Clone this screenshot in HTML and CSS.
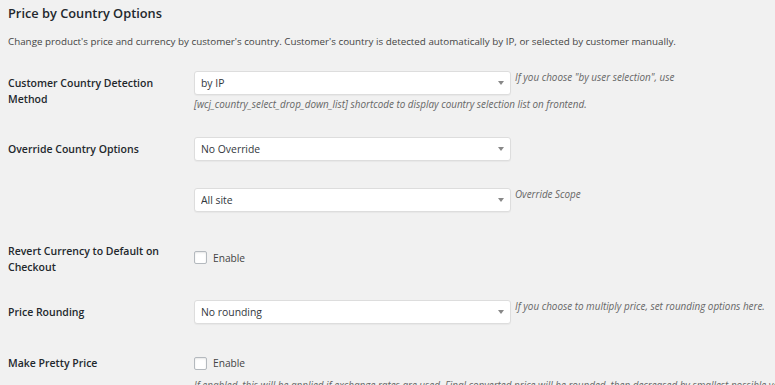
FILE: index.html
```html
<!doctype html>
<html>

	<head>
		<title>Price by Country Options</title>
		<meta charset="utf-8" />
		<link rel="stylesheet" href="styles.css">
	</head>

	<body>

		<div class="wrap">
			<h2>Price by Country Options</h2>
			<p class="intro">Change product's price and currency by customer's country. Customer's country is detected automatically by IP, or selected by customer manually.</p>

			<div class="row row-detect">
				<div class="label">Customer Country Detection Method</div>
				<div class="field">
					<span class="select"><select><option>by IP</option></select></span><span class="desc">If you choose "by user selection", use [wcj_country_select_drop_down_list] shortcode to display country selection list on frontend.</span>
				</div>
			</div>

			<div class="row row-override">
				<div class="label">Override Country Options</div>
				<div class="field">
					<span class="select"><select><option>No Override</option></select></span>
				</div>
			</div>

			<div class="row row-scope">
				<div class="label"></div>
				<div class="field">
					<span class="select"><select><option>All site</option></select></span><span class="desc">Override Scope</span>
				</div>
			</div>

			<div class="row row-revert">
				<div class="label label-plain">Revert Currency to Default on Checkout</div>
				<div class="field">
					<label class="check"><input type="checkbox" /> Enable</label>
				</div>
			</div>

			<div class="row row-rounding">
				<div class="label">Price Rounding</div>
				<div class="field">
					<span class="select"><select><option>No rounding</option></select></span><span class="desc">If you choose to multiply price, set rounding options here.</span>
				</div>
			</div>

			<div class="row row-pretty">
				<div class="label label-plain">Make Pretty Price</div>
				<div class="field">
					<label class="check"><input type="checkbox" /> Enable</label>
					<p class="desc desc-block">If enabled, this will be applied if exchange rates are used. Final converted price will be rounded, then decreased by smallest possible value.</p>
				</div>
			</div>
		</div>

	</body>

</html>
```

FILE: styles.css
```css
html {
	overflow: hidden;
}

body {
	margin: 0;
	background: #f1f1f1;
	color: #444;
	font-family: "Open Sans", "Noto Sans", sans-serif;
	font-size: 10px;
}

.wrap {
	width: 800px;
	padding: 0 8px;
}

h2 {
	margin: 3px 0 0;
	font-size: 12.8px;
	line-height: 20px;
	font-weight: 600;
	color: #23282d;
}

.intro {
	margin: 10px 0 0;
	font-size: 9.8px;
	line-height: 18px;
}

.row {
	display: flex;
	align-items: flex-start;
}

.label {
	width: 170px;
	padding: 4px 16px 0 0;
	flex-shrink: 0;
	font-size: 10.5px;
	font-weight: 600;
	line-height: 16px;
	color: #23282d;
}

.label-plain {
	padding-top: 0;
}

.field {
	flex: 1;
	line-height: 13px;
}

.row-detect {
	margin-top: 20px;
}

.row-override {
	margin-top: 26px;
}

.row-scope {
	margin-top: 24px;
}

.row-revert {
	margin-top: 28px;
}

.row-revert .field {
	padding-top: 8px;
}

.row-rounding {
	margin-top: 25px;
}

.row-pretty {
	margin-top: 28px;
}

.select {
	position: relative;
	display: inline-block;
	vertical-align: top;
	margin: 0 4px 3px 0;
}

.select select {
	-webkit-appearance: none;
	appearance: none;
	display: block;
	width: 317px;
	height: 24px;
	margin: 0;
	padding: 0 20px 0 6px;
	border: 1px solid #ddd;
	border-radius: 3px;
	background: #fff;
	box-shadow: 0 1px 1px rgba(0, 0, 0, 0.04);
	font-family: inherit;
	font-size: 10.4px;
	color: #32373c;
	outline: none;
}

.select:after {
	content: '';
	position: absolute;
	right: 7px;
	top: 10px;
	border-left: 3px solid transparent;
	border-right: 3px solid transparent;
	border-top: 4px solid #888;
}

.desc {
	vertical-align: top;
	font-style: italic;
	font-size: 9.9px;
	line-height: 13px;
	color: #666;
}

.check {
	display: flex;
	align-items: center;
	height: 16px;
	line-height: 16px;
	font-size: 10.2px;
	color: #444;
}

.check input {
	-webkit-appearance: none;
	appearance: none;
	width: 13px;
	height: 13px;
	margin: 0 6px 0 0;
	border: 1px solid #b4b9be;
	border-radius: 2px;
	background: #fff;
	box-shadow: inset 0 1px 2px rgba(0, 0, 0, 0.1);
}

.row-revert .check {
	height: 13px;
}

.desc-block {
	display: block;
	margin: 6px 0 0;
	line-height: 16px;
}
```
